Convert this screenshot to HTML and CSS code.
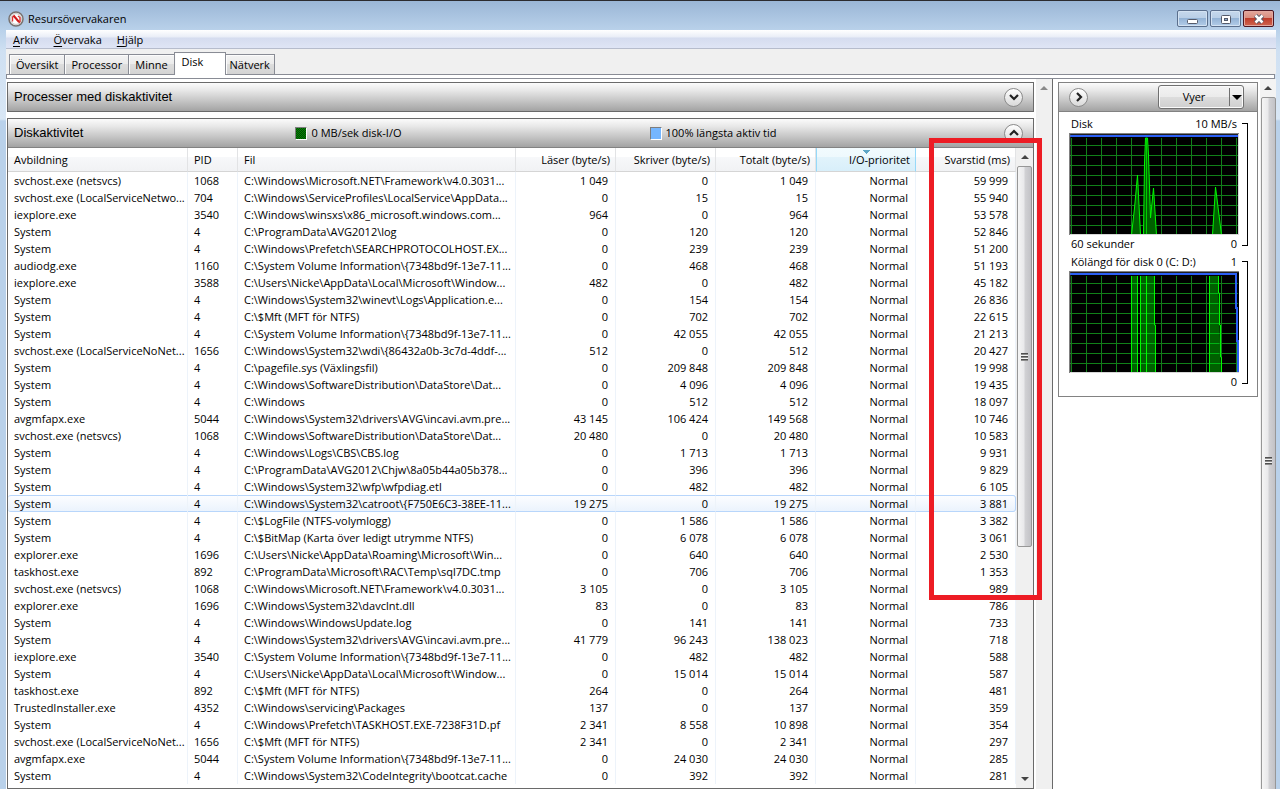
FILE: index.html
```html
<!DOCTYPE html>
<html lang="sv">
<head>
<meta charset="utf-8">
<title>Resursövervakaren</title>
<link rel="stylesheet" href="styles.css">
</head>
<body>
<div class="window">
  <header class="titlebar">
    <svg class="app-icon" width="16" height="16" viewBox="0 0 16 16"><circle cx="8" cy="8" r="7" fill="#f4f4f4" stroke="#77716f" stroke-width="1.5"/><circle cx="8" cy="8" r="5.4" fill="#fff" stroke="#c9c4c2"/><path d="M4.500 10.500V6.200L6 5M10 5l2 1.500v4L11 12" fill="none" stroke="#d93434" stroke-width="1.400"/><path d="M5.500 4.500l5.500 6.500" stroke="#d01818" stroke-width="2"/></svg>
    <h1 class="title">Resursövervakaren</h1>
    <div class="caption-buttons">
      <button class="caption" aria-label="Minimera"><svg width="12" height="12" viewBox="0 0 12 12"><rect x="0.500" y="6.500" width="10" height="4" rx="1" fill="#fff" stroke="#555b6b"/></svg></button>
      <button class="caption" aria-label="Maximera"><svg width="12" height="12" viewBox="0 0 12 12"><rect x="1.500" y="2.500" width="9" height="8" rx="1" fill="#fff" stroke="#555b6b"/><rect x="4.500" y="5.500" width="3" height="2" fill="#8cabcf" stroke="#555b6b"/></svg></button>
      <button class="caption close" aria-label="Stäng"><svg width="14" height="12" viewBox="0 0 14 12"><path d="M3.500 2.500l7 7M10.500 2.500l-7 7" stroke="#535666" stroke-width="4.500"/><path d="M3.500 2.500l7 7M10.500 2.500l-7 7" stroke="#fff" stroke-width="2.500"/></svg></button>
    </div>
  </header>
  <nav class="menubar">
    <button class="menu"><u>A</u>rkiv</button>
    <button class="menu"><u>Ö</u>vervaka</button>
    <button class="menu"><u>H</u>jälp</button>
  </nav>
  <div class="tabs" role="tablist">
    <button class="tab" role="tab">Översikt</button>
    <button class="tab" role="tab">Processor</button>
    <button class="tab" role="tab">Minne</button>
    <button class="tab active" role="tab" aria-selected="true">Disk</button>
    <button class="tab last" role="tab">Nätverk</button>
  </div>
  <div class="tab-edge"></div>
  <div class="content">
    <main class="main">
      <section class="panel">
        <div class="panel-head">
          <h2>Processer med diskaktivitet</h2>
          <button class="round" aria-label="Expandera"><svg width="10" height="8" viewBox="0 0 10 8"><path d="M1 2l4 4 4-4" fill="none" stroke="#222" stroke-width="2.200"/></svg></button>
        </div>
      </section>
      <section class="panel grow">
        <div class="panel-head">
          <h2>Diskaktivitet</h2>
          <span class="legend io"><i class="swatch green"></i>0 MB/sek disk-I/O</span>
          <span class="legend active-time"><i class="swatch blue"></i>100% längsta aktiv tid</span>
          <button class="round" aria-label="Dölj"><svg width="10" height="8" viewBox="0 0 10 8"><path d="M1 6l4-4 4 4" fill="none" stroke="#222" stroke-width="2.200"/></svg></button>
        </div>
        <div class="list">
          <div class="table-wrap">
          <table class="grid">
            <colgroup><col class="c-image"><col class="c-pid"><col><col class="c-num"><col class="c-num"><col class="c-num"><col class="c-num"><col class="c-num"></colgroup>
            <thead><tr><th>Avbildning</th><th>PID</th><th>Fil</th><th>Läser (byte/s)</th><th>Skriver (byte/s)</th><th>Totalt (byte/s)</th><th class="sorted">I/O-prioritet</th><th>Svarstid (ms)</th></tr></thead>
            <tbody>
<tr><td>svchost.exe (netsvcs)</td><td>1068</td><td>C:\Windows\Microsoft.NET\Framework\v4.0.3031...</td><td>1 049</td><td>0</td><td>1 049</td><td>Normal</td><td>59 999</td></tr>
<tr><td>svchost.exe (LocalServiceNetwo...</td><td>704</td><td>C:\Windows\ServiceProfiles\LocalService\AppData...</td><td>0</td><td>15</td><td>15</td><td>Normal</td><td>55 940</td></tr>
<tr><td>iexplore.exe</td><td>3540</td><td>C:\Windows\winsxs\x86_microsoft.windows.com...</td><td>964</td><td>0</td><td>964</td><td>Normal</td><td>53 578</td></tr>
<tr><td>System</td><td>4</td><td>C:\ProgramData\AVG2012\log</td><td>0</td><td>120</td><td>120</td><td>Normal</td><td>52 846</td></tr>
<tr><td>System</td><td>4</td><td>C:\Windows\Prefetch\SEARCHPROTOCOLHOST.EX...</td><td>0</td><td>239</td><td>239</td><td>Normal</td><td>51 200</td></tr>
<tr><td>audiodg.exe</td><td>1160</td><td>C:\System Volume Information\{7348bd9f-13e7-11...</td><td>0</td><td>468</td><td>468</td><td>Normal</td><td>51 193</td></tr>
<tr><td>iexplore.exe</td><td>3588</td><td>C:\Users\Nicke\AppData\Local\Microsoft\Window...</td><td>482</td><td>0</td><td>482</td><td>Normal</td><td>45 182</td></tr>
<tr><td>System</td><td>4</td><td>C:\Windows\System32\winevt\Logs\Application.e...</td><td>0</td><td>154</td><td>154</td><td>Normal</td><td>26 836</td></tr>
<tr><td>System</td><td>4</td><td>C:\$Mft (MFT för NTFS)</td><td>0</td><td>702</td><td>702</td><td>Normal</td><td>22 615</td></tr>
<tr><td>System</td><td>4</td><td>C:\System Volume Information\{7348bd9f-13e7-11...</td><td>0</td><td>42 055</td><td>42 055</td><td>Normal</td><td>21 213</td></tr>
<tr><td>svchost.exe (LocalServiceNoNet...</td><td>1656</td><td>C:\Windows\System32\wdi\{86432a0b-3c7d-4ddf-...</td><td>512</td><td>0</td><td>512</td><td>Normal</td><td>20 427</td></tr>
<tr><td>System</td><td>4</td><td>C:\pagefile.sys (Växlingsfil)</td><td>0</td><td>209 848</td><td>209 848</td><td>Normal</td><td>19 998</td></tr>
<tr><td>System</td><td>4</td><td>C:\Windows\SoftwareDistribution\DataStore\Dat...</td><td>0</td><td>4 096</td><td>4 096</td><td>Normal</td><td>19 435</td></tr>
<tr><td>System</td><td>4</td><td>C:\Windows</td><td>0</td><td>512</td><td>512</td><td>Normal</td><td>18 097</td></tr>
<tr><td>avgmfapx.exe</td><td>5044</td><td>C:\Windows\System32\drivers\AVG\incavi.avm.pre...</td><td>43 145</td><td>106 424</td><td>149 568</td><td>Normal</td><td>10 746</td></tr>
<tr><td>svchost.exe (netsvcs)</td><td>1068</td><td>C:\Windows\SoftwareDistribution\DataStore\Dat...</td><td>20 480</td><td>0</td><td>20 480</td><td>Normal</td><td>10 583</td></tr>
<tr><td>System</td><td>4</td><td>C:\Windows\Logs\CBS\CBS.log</td><td>0</td><td>1 713</td><td>1 713</td><td>Normal</td><td>9 931</td></tr>
<tr><td>System</td><td>4</td><td>C:\ProgramData\AVG2012\Chjw\8a05b44a05b378...</td><td>0</td><td>396</td><td>396</td><td>Normal</td><td>9 829</td></tr>
<tr><td>System</td><td>4</td><td>C:\Windows\System32\wfp\wfpdiag.etl</td><td>0</td><td>482</td><td>482</td><td>Normal</td><td>6 105</td></tr>
<tr class="hot"><td>System</td><td>4</td><td>C:\Windows\System32\catroot\{F750E6C3-38EE-11...</td><td>19 275</td><td>0</td><td>19 275</td><td>Normal</td><td>3 881</td></tr>
<tr><td>System</td><td>4</td><td>C:\$LogFile (NTFS-volymlogg)</td><td>0</td><td>1 586</td><td>1 586</td><td>Normal</td><td>3 382</td></tr>
<tr><td>System</td><td>4</td><td>C:\$BitMap (Karta över ledigt utrymme NTFS)</td><td>0</td><td>6 078</td><td>6 078</td><td>Normal</td><td>3 061</td></tr>
<tr><td>explorer.exe</td><td>1696</td><td>C:\Users\Nicke\AppData\Roaming\Microsoft\Win...</td><td>0</td><td>640</td><td>640</td><td>Normal</td><td>2 530</td></tr>
<tr><td>taskhost.exe</td><td>892</td><td>C:\ProgramData\Microsoft\RAC\Temp\sql7DC.tmp</td><td>0</td><td>706</td><td>706</td><td>Normal</td><td>1 353</td></tr>
<tr><td>svchost.exe (netsvcs)</td><td>1068</td><td>C:\Windows\Microsoft.NET\Framework\v4.0.3031...</td><td>3 105</td><td>0</td><td>3 105</td><td>Normal</td><td>989</td></tr>
<tr><td>explorer.exe</td><td>1696</td><td>C:\Windows\System32\davclnt.dll</td><td>83</td><td>0</td><td>83</td><td>Normal</td><td>786</td></tr>
<tr><td>System</td><td>4</td><td>C:\Windows\WindowsUpdate.log</td><td>0</td><td>141</td><td>141</td><td>Normal</td><td>733</td></tr>
<tr><td>System</td><td>4</td><td>C:\Windows\System32\drivers\AVG\incavi.avm.pre...</td><td>41 779</td><td>96 243</td><td>138 023</td><td>Normal</td><td>718</td></tr>
<tr><td>iexplore.exe</td><td>3540</td><td>C:\System Volume Information\{7348bd9f-13e7-11...</td><td>0</td><td>482</td><td>482</td><td>Normal</td><td>588</td></tr>
<tr><td>System</td><td>4</td><td>C:\Users\Nicke\AppData\Local\Microsoft\Window...</td><td>0</td><td>15 014</td><td>15 014</td><td>Normal</td><td>587</td></tr>
<tr><td>taskhost.exe</td><td>892</td><td>C:\$Mft (MFT för NTFS)</td><td>264</td><td>0</td><td>264</td><td>Normal</td><td>481</td></tr>
<tr><td>TrustedInstaller.exe</td><td>4352</td><td>C:\Windows\servicing\Packages</td><td>137</td><td>0</td><td>137</td><td>Normal</td><td>359</td></tr>
<tr><td>System</td><td>4</td><td>C:\Windows\Prefetch\TASKHOST.EXE-7238F31D.pf</td><td>2 341</td><td>8 558</td><td>10 898</td><td>Normal</td><td>354</td></tr>
<tr><td>svchost.exe (LocalServiceNoNet...</td><td>1656</td><td>C:\$Mft (MFT för NTFS)</td><td>2 341</td><td>0</td><td>2 341</td><td>Normal</td><td>297</td></tr>
<tr><td>avgmfapx.exe</td><td>5044</td><td>C:\System Volume Information\{7348bd9f-13e7-11...</td><td>0</td><td>24 030</td><td>24 030</td><td>Normal</td><td>285</td></tr>
<tr><td>System</td><td>4</td><td>C:\Windows\System32\CodeIntegrity\bootcat.cache</td><td>0</td><td>392</td><td>392</td><td>Normal</td><td>281</td></tr>
            </tbody>
          </table>
          </div>
          <div class="scroll list-scroll">
            <i class="arrow up"></i>
            <div class="thumb list-thumb"><i class="grip"></i></div>
            <div class="space"></div>
            <i class="arrow down"></i>
          </div>
        </div>
        <div class="highlight"></div>
      </section>
    </main>
    <div class="scroll idle"><i class="arrow up"></i></div>
    <aside class="side">
      <section class="charts">
        <div class="panel-head side-head">
          <button class="round" aria-label="Dölj diagram"><svg width="8" height="10" viewBox="0 0 8 10"><path d="M2 1l4 4-4 4" fill="none" stroke="#222" stroke-width="2.200"/></svg></button>
          <button class="views"><span class="views-text">Vyer</span><span class="views-arrow"></span></button>
        </div>
        <div class="chart">
          <div class="chart-body">
            <div class="label"><span>Disk</span><span>10 MB/s</span></div>
            <svg class="plot" viewBox="0 0 170 102" preserveAspectRatio="none">
              <rect width="170" height="102" fill="#000"/>
              <path d="M2.500 5v97M17.500 5v97M32.500 5v97M47.500 5v97M62.500 5v97M77.500 5v97M92.500 5v97M107.500 5v97M122.500 5v97M137.500 5v97M152.500 5v97M167.500 5v97M1 12.500h168M1 22.500h168M1 32.500h168M1 42.500h168M1 52.500h168M1 62.500h168M1 72.500h168M1 82.500h168M1 92.500h168" stroke="#118019"/>
              <path d="M62.500 102L65.500 75L68.500 42L71.500 102ZM74.500 102L75.500 30L76.500 5H78.500L79.500 22L81.500 85L84.500 55L87.500 102ZM143.500 102L146.500 54L152.500 102Z" fill="#006000" stroke="#00fa00"/>
              <path d="M77.500 5v97" stroke="#00d000"/>
              <path d="M1 3h168" stroke="#2b5ff5" stroke-width="2"/>
              <path d="M0 .5h170M.5 0v102" stroke="#808080" stroke-width="1.500"/>
              <path d="M169.500 1v101M1 101.500h169" stroke="#d8d8d8"/>
            </svg>
            <div class="label"><span>60 sekunder</span><span>0</span></div>
          </div>
          <div class="bracket"></div>
        </div>
        <div class="chart">
          <div class="chart-body">
            <div class="label"><span>Kölängd för disk 0 (C: D:)</span><span>1</span></div>
            <svg class="plot" viewBox="0 0 170 102" preserveAspectRatio="none">
              <rect width="170" height="102" fill="#000"/>
              <path d="M62 5H68V102H62ZM71 5H85L87 102H71ZM140 5H149L152 102H140Z" fill="#006000"/>
              <path d="M2.500 5v97M17.500 5v97M32.500 5v97M47.500 5v97M62.500 5v97M77.500 5v97M92.500 5v97M107.500 5v97M122.500 5v97M137.500 5v97M152.500 5v97M167.500 5v97M1 12.500h168M1 22.500h168M1 32.500h168M1 42.500h168M1 52.500h168M1 62.500h168M1 72.500h168M1 82.500h168M1 92.500h168" stroke="#118019"/>
              <path d="M62 12.500h6M71 12.500h15M140 12.500h9M62 22.500h6M71 22.500h15M140 22.500h9M62 32.500h6M71 32.500h15M140 32.500h9M62 42.500h6M71 42.500h15M140 42.500h9M62 52.500h6M71 52.500h15M140 52.500h10M62 62.500h6M71 62.500h15M140 62.500h10M62 72.500h6M71 72.500h15M140 72.500h10M62 82.500h6M71 82.500h15M140 82.500h10M62 92.500h6M71 92.500h15M140 92.500h11" stroke="#00b414"/>
              <path d="M62.500 5v97M68.500 5v97M71.500 5v97M77.500 5v97M85.500 5v49h1v48M140.500 5v97M149.500 5v17h1v32h1v32h1v16" fill="none" stroke="#00fa00"/>
              <path d="M1 3h166v34h1v33h1v32" fill="none" stroke="#2b5ff5" stroke-width="2"/>
              <path d="M0 .5h170M.5 0v102" stroke="#808080" stroke-width="1.500"/>
              <path d="M1 101.500h169" stroke="#d8d8d8"/>
            </svg>
            <div class="label"><span></span><span>0</span></div>
          </div>
          <div class="bracket"></div>
        </div>
      </section>
    </aside>
    <div class="scroll outer"><i class="arrow up"></i><div class="thumb full"><i class="grip"></i></div></div>
  </div>
</div>
</body>
</html>
```
FILE: styles.css
```css
* { box-sizing: border-box; }
body {
  margin: 0;
  font-family: "Open Sans", "Noto Sans", sans-serif;
  font-size: 11px;
  line-height: 16px;
  color: #000;
}
button { font: inherit; color: inherit; margin: 0; padding: 0; }
h1, h2 { margin: 0; font-weight: 400; }
svg { display: block; }

.window {
  display: flex;
  flex-direction: column;
  height: 100vh;
  overflow: hidden;
  padding: 0 4px 0 6px;
  border-top: 1px solid #2b2b2f;
  background: linear-gradient(#9ab6d6 0, #b9d1ea 29px, #cfe0f2 50px, #d9e7f5 118px, #b9d1ea 120px);
}
.titlebar {
  display: flex;
  flex: none;
  align-items: center;
  height: 29px;
  padding: 6px 2px 0 2px;
}
.title { flex: 1; padding-left: 4px; font-size: 11px; }
.caption-buttons { display: flex; gap: 2px; }
.caption {
  display: flex;
  align-items: center;
  justify-content: center;
  width: 31px;
  height: 17px;
  border: 1px solid #5b6f8d;
  border-radius: 2px;
  background: linear-gradient(#c6d8ec 0, #b8cee6 50%, #94b3d5 50%, #b3cde9 100%);
  box-shadow: inset 0 0 0 1px #d3e2f2;
}
.close {
  border-color: #4c1520;
  background: linear-gradient(#e3a79c 0, #d98b7c 50%, #bf3d2b 50%, #cf6550 100%);
  box-shadow: inset 0 0 0 1px #e2a89f;
}

.menubar {
  display: flex;
  flex: none;
  gap: 15px;
  height: 19px;
  padding: 0 7px;
  border-bottom: 1px solid #b6bccc;
  background: linear-gradient(#fff 0, #e9edf7 7px, #d5dcef 8px, #dfe5f5 18px);
}
.menu { border: 0; background: none; line-height: 20px; }
.menu u { text-underline-offset: 2px; }

.tabs {
  display: flex;
  flex: none;
  align-items: flex-end;
  height: 25px;
  padding-left: 3px;
  background: #f0f0f0;
}
.tab {
  height: 20px;
  padding: 0 6px;
  border: 1px solid #898c95;
  border-bottom: 0;
  margin-right: -1px;
  background: linear-gradient(#f3f3f3 0, #ebebeb 50%, #dddddd 50%, #d3d3d3 100%);
  box-shadow: inset 1px 1px 0 #fcfcfc;
}
.tab.active {
  z-index: 1;
  width: 52px;
  height: 23px;
  padding: 0 7px 4px;
  margin-bottom: -1px;
  background: #fff;
  text-align: left;
}
.tab.last { padding: 0 4px; }
.tab-edge {
  flex: none;
  height: 5px;
  margin-right: 1px;
  border: 1px solid #898c95;
  background: #fff;
}

.content { display: flex; flex: 1; min-height: 0; background: #fff; }
.main {
  display: flex;
  flex: 1;
  flex-direction: column;
  gap: 6px;
  min-width: 0;
  padding: 3px 2px 0 1px;
}
.panel { position: relative; border: 1px solid #6a6a6a; }
.grow { display: flex; flex: 1; flex-direction: column; min-height: 0; }
.panel-head {
  display: flex;
  flex: none;
  align-items: center;
  height: 29px;
  padding: 0 10px 0 6px;
  border-bottom: 1px solid #828282;
  background: linear-gradient(#fbfbfb 0, #e9e9e9 25%, #c4c4c4 65%, #a3a3a3 100%);
}
.panel:not(.grow) .panel-head { height: 28px; border-bottom: 0; }
.panel-head h2 {
  flex: 1;
  font-family: "Liberation Sans", Arial, sans-serif;
  font-size: 13px;
}
.panel-head h2 + .legend { margin-left: -2px; }
.grow h2 { flex: 0 0 28%; }
.legend { display: flex; align-items: center; gap: 5px; }
.io { flex: 0 0 355px; }
.active-time { flex: 1; gap: 4px; }
.swatch { width: 12px; height: 13px; border: 1px solid #7d7d7d; border-right-color: #fff; border-bottom-color: #fff; }
.green { background: repeating-conic-gradient(#004a00 0 25%, #078307 0 50%) 0 0 / 2px 2px; }
.blue { background: #75b6ff; }
.round {
  display: flex;
  align-items: center;
  justify-content: center;
  width: 19px;
  height: 19px;
  border: 1px solid #8a8a8a;
  border-radius: 50%;
  background: linear-gradient(#fff, #d9d9d9);
}

.list { display: flex; flex: 1; min-height: 0; }
.table-wrap { flex: 1; min-width: 0; overflow: hidden; }
.grid { width: 100%; border-collapse: separate; border-spacing: 0; table-layout: fixed; }
.c-image { width: 180px; }
.c-pid { width: 50px; }
.c-num { width: 100px; }
.grid th, .grid td {
  overflow: hidden;
  padding: 0 0 0 6px;
  white-space: nowrap;
  text-align: left;
  font-weight: 400;
}
.grid th {
  height: 24px;
  border-right: 1px solid #e2e3e5;
  border-bottom: 1px solid #d5d5d5;
  background: linear-gradient(#fff 0, #fff 40%, #f7f8fa 40%, #f1f2f4 100%);
}
.grid td { height: 17px; line-height: 17px; border-right: 1px solid #edf3fa; }
.grid th:nth-child(n+4) { padding-right: 5px; text-align: right; }
.grid td:nth-child(n+4) { padding-right: 7px; text-align: right; }
.grid .sorted {
  border-right-color: #96d9f9;
  border-left: 1px solid #96d9f9;
  background:
    conic-gradient(from 135deg at 50% 100%, transparent 0) 50% 2px / 7px 4px no-repeat,
    linear-gradient(135deg, #5fa6c6 50%, transparent 50%) 50px 2px / 4px 4px no-repeat,
    linear-gradient(225deg, #5fa6c6 50%, transparent 50%) 46px 2px / 4px 4px no-repeat,
    linear-gradient(#f2fbfe 0, #eef9fd 40%, #e1f3fb 40%, #d8effa 100%);
}
.hot td {
  border-top: 1px solid #b8d6fb;
  border-bottom: 1px solid #b8d6fb;
  background: linear-gradient(#fcfdff, #ebf3fd);
  line-height: 15px;
}
.hot td:first-child { border-radius: 3px 0 0 3px; }
.hot td:last-child { border-right-color: #b8d6fb; border-radius: 0 3px 3px 0; }

.scroll {
  display: flex;
  flex: none;
  flex-direction: column;
  align-items: center;
  width: 16px;
  background: #f0f0f0;
}
.list-scroll { width: 17px; }
.arrow { flex: none; margin: 7px 0; border: 4px solid transparent; }
.up { border-top: 0; border-bottom-color: #444; }
.down { border-bottom: 0; border-top-color: #444; }
.thumb {
  display: flex;
  align-items: center;
  justify-content: center;
  width: 15px;
  border: 1px solid #979797;
  border-radius: 2px;
  background: linear-gradient(90deg, #f5f5f5 0, #e9e9eb 45%, #d1d1d4 55%, #c2c2c6 100%);
}
.list-thumb { flex: 0 0 381px; }
.full { flex: none; height: calc(100vh - 62px); }
.grip { width: 7px; height: 8px; background: repeating-linear-gradient(#505050 0 1px, #8c8c8c 1px 2px, #f4f4f4 2px 3px); }
.space { flex: 1; }
.idle .up { border-bottom-color: #8a8a8a; }
.outer { background: #f3f3f3; }

.highlight {
  position: absolute;
  top: 19px;
  right: -9px;
  width: 113px;
  height: 462px;
  border: 5px solid #ed1c24;
}

.side {
  flex: none;
  width: 208px;
  padding: 3px 2px 0 5px;
  border-left: 1px solid #6a6a6a;
  background: #fff;
}
.charts { padding-bottom: 5px; border: 1px solid #828282; }
.side-head { justify-content: space-between; margin-bottom: 3px; padding: 0 13px 0 10px; }
.views {
  display: flex;
  align-items: center;
  width: 86px;
  height: 24px;
  border: 1px solid #707070;
  border-radius: 3px;
  background: linear-gradient(#f3f3f3 0, #ebebeb 50%, #dddddd 50%, #cfcfcf 100%);
  box-shadow: inset 0 0 0 1px #fafafa;
}
.views-text { flex: 1; }
.views-arrow {
  display: flex;
  align-items: center;
  justify-content: center;
  width: 14px;
  height: 18px;
  border-left: 1px solid #707070;
}
.views-arrow::before { content: ""; border: 5px solid transparent; border-top-color: #000; border-bottom: 0; }
.chart { display: flex; gap: 3px; padding: 0 9px 0 10px; }
.chart-body { flex: 1; }
.label { display: flex; justify-content: space-between; height: 18px; padding: 0 2px; line-height: 18px; }
.plot { width: 100%; height: 102px; }
.bracket { width: 6px; margin: 8px 0 7px; border: 1px solid #000; border-left: 0; }
```
